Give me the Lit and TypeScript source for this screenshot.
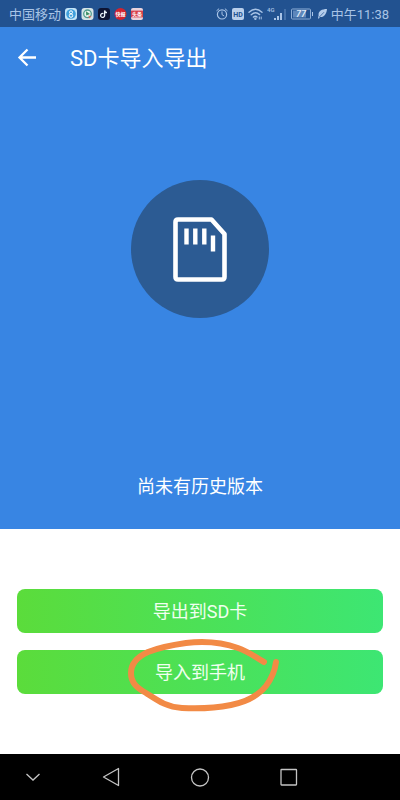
import { LitElement, html, css } from "lit";
import { customElement } from "lit/decorators.js";

@customElement("status-bar")
class StatusBar extends LitElement {
  static styles = css`
    :host {
      display: flex;
      justify-content: space-between;
      align-items: center;
      height: 27px;
      padding: 0 11px 0 9px;
      background: #225290;
      color: #a9c4e6;
      font-size: 13px;
      line-height: 20px;
      white-space: nowrap;
    }
    .side {
      display: flex;
      align-items: center;
      gap: 4px;
    }
    span {
      padding-top: 2px;
    }
    svg {
      display: block;
      flex: none;
    }
    .tiny {
      font-family: "Noto Sans CJK SC", sans-serif;
      font-weight: 700;
      font-size: 5px;
      text-anchor: middle;
      fill: #fff;
    }
    .hd {
      font-family: Roboto, sans-serif;
      font-weight: 700;
      font-size: 7px;
      text-anchor: middle;
      fill: #225290;
    }
    .net {
      font-family: Roboto, sans-serif;
      font-weight: 500;
      font-size: 6px;
      fill: #a9c4e6;
    }
    .level {
      font-family: Roboto, sans-serif;
      font-style: italic;
      font-weight: 500;
      font-size: 9px;
      text-anchor: middle;
      fill: #e4eefa;
    }
  `;

  render() {
    return html`
      <div class="side">
        <span>中国移动</span>
        <svg width="12" height="12" viewBox="0 0 12 12">
          <rect width="12" height="12" rx="3" fill="#c4e4f7" />
          <circle cx="6" cy="6" r="4.8" fill="#3f9fdc" />
          <circle cx="6" cy="4.3" r="1.5" fill="none" stroke="#fff" />
          <circle cx="6" cy="7.6" r="1.7" fill="none" stroke="#fff" />
        </svg>
        <svg width="13" height="12" viewBox="0 0 13 12">
          <rect x="0.5" width="12" height="12" rx="3" fill="#d5e3e6" />
          <circle cx="6.5" cy="5.8" r="3.8" fill="#e8f4ee" stroke="#4f9b8e" stroke-width="1.3" />
          <path d="M5 3.2L9 6L5.2 7.4Z" fill="#3d8e62" />
          <path d="M7.5 7.5L10.5 8.5L8 10.5Z" fill="#d46a5c" />
        </svg>
        <svg width="12" height="12" viewBox="0 0 12 12">
          <rect width="12" height="12" rx="3" fill="#0d1433" />
          <path d="M5.4 5.6A2 2 0 1 0 6.6 7.6V2.4C6.8 3.7 7.6 4.6 9 4.7" fill="none" stroke="#e8f2fa" stroke-width="1.3" />
        </svg>
        <svg width="13" height="12" viewBox="0 0 13 12">
          <circle cx="6.5" cy="6" r="6" fill="#d2232f" />
          <text class="tiny" x="6.5" y="8">快报</text>
        </svg>
        <svg width="12" height="12" viewBox="0 0 12 12">
          <rect width="12" height="12" rx="2" fill="#ead3dc" />
          <rect y="2.6" width="12" height="6.8" fill="#d8424c" />
          <text class="tiny" x="6" y="8">头条</text>
        </svg>
      </div>
      <div class="side">
        <svg width="12" height="12" viewBox="0 0 12 12" fill="none" stroke="#a9c4e6" stroke-linecap="round">
          <circle cx="6" cy="6.4" r="4.6" stroke-width="1.2" />
          <path d="M6 3.8V6.6L7.8 7.8M0.8 2.6L2.8 0.9M11.2 2.6L9.2 0.9" />
        </svg>
        <svg width="12" height="12" viewBox="0 0 12 12">
          <rect width="12" height="12" rx="2" fill="#b9cfeb" />
          <text class="hd" x="6" y="8.6">HD</text>
        </svg>
        <svg width="15" height="12" viewBox="0 0 15 12" fill="none" stroke="#a9c4e6" stroke-width="1.4" stroke-linecap="round">
          <path d="M1 4.2Q7.5 -1.6 14 4.2M3.2 6.8Q7.5 3 11.6 6.6M5.4 9.1Q7.4 7.5 9 9" />
          <circle cx="7.4" cy="10.7" r="0.5" />
          <path d="M11.3 9V11M13.2 9V11" stroke-width="1" />
        </svg>
        <svg width="20" height="14" viewBox="0 0 20 14">
          <text class="net" x="0" y="5">4G</text>
          <path d="M7 11H9V13H7ZM10 9H12V13H10ZM13 6H15V13H13Z" fill="#a9c4e6" />
          <path d="M17 2H19V13H17Z" fill="#4470a8" />
        </svg>
        <svg width="23" height="12" viewBox="0 0 23 12">
          <rect x="0.5" y="1" width="19" height="10" rx="1" fill="none" stroke="#8eaed6" />
          <rect x="2" y="2.5" width="13" height="7" fill="#5e87bb" />
          <path d="M21 4H22V8H21Z" fill="#a9c4e6" />
          <text class="level" x="10" y="9.3">77</text>
        </svg>
        <svg width="9" height="10" viewBox="0 0 9 10">
          <path d="M9 0C4 0 0 2 0.6 6.4L0 9.6H1L1.8 8C6 8.6 8.6 5 9 0Z" fill="#b4cdec" />
          <path d="M1.4 8L6 3.2" stroke="#225290" stroke-width="0.7" />
        </svg>
        <span>中午11:38</span>
      </div>
    `;
  }
}

@customElement("system-nav")
class SystemNav extends LitElement {
  static styles = css`
    :host {
      display: grid;
      grid-template-columns: 16fr 23fr 22fr 22fr 17fr;
      align-items: center;
      height: 46px;
      background: #000;
    }
    button {
      display: flex;
      justify-content: center;
      padding: 0;
      border: 0;
      background: none;
    }
    svg {
      display: block;
      fill: none;
      stroke: #c4c4c4;
      stroke-width: 1.3;
    }
  `;

  render() {
    return html`
      <button aria-label="收起">
        <svg width="20" height="20"><path d="M4.500 7L11 13L17.500 7" /></svg>
      </button>
      <button aria-label="返回">
        <svg width="20" height="20"><path d="M18.5 1.5V18.5L3.500 10Z" stroke-linejoin="round" /></svg>
      </button>
      <button aria-label="主页">
        <svg width="20" height="20"><circle cx="10" cy="10.5" r="8.500" /></svg>
      </button>
      <button aria-label="最近任务">
        <svg width="20" height="20"><rect x="3" y="2.5" width="15.5" height="15.5" rx="0.5" /></svg>
      </button>
    `;
  }
}

@customElement("app-root")
class AppRoot extends LitElement {
  static styles = css`
    :host {
      display: flex;
      flex-direction: column;
      min-height: 100vh;
      background: #fff;
      color: #fff;
      font-family: Roboto, "Noto Sans CJK SC", sans-serif;
    }
    .hero {
      display: flex;
      flex-direction: column;
      flex: 1 0 auto;
      background: #3885e3;
    }
    header {
      display: flex;
      align-items: center;
      gap: 33px;
      height: 62px;
      padding: 0 17px;
    }
    .back {
      padding: 0;
      border: 0;
      background: none;
    }
    svg {
      display: block;
    }
    h1 {
      margin: 0;
      padding-top: 2px;
      font-weight: 400;
      font-size: 22px;
      line-height: 32px;
    }
    .body {
      display: flex;
      flex-direction: column;
      align-items: center;
      justify-content: space-between;
      flex: 1;
      gap: 32px;
      padding: 91px 16px 28px;
    }
    .disc {
      display: grid;
      place-items: center;
      width: 138px;
      height: 138px;
      border-radius: 50%;
      background: #2c5b93;
    }
    p {
      margin: 0;
      font-size: 18px;
      line-height: 28px;
    }
    .actions {
      display: flex;
      flex-direction: column;
      gap: 17px;
      padding: 60px 17px;
    }
    .slot {
      position: relative;
      display: grid;
    }
    .action {
      height: 44px;
      padding: 2px 0 0;
      border: 0;
      border-radius: 8px;
      background: linear-gradient(90deg, #5bdc3b, #3de673);
      color: #f0fff0;
      font: inherit;
      font-size: 18px;
      line-height: 28px;
    }
    .mark {
      position: absolute;
      left: 50%;
      top: 50%;
      transform: translate(-50%, -50%);
      pointer-events: none;
    }
  `;

  render() {
    return html`
      <status-bar></status-bar>
      <section class="hero">
        <header>
          <button class="back" aria-label="返回">
            <svg width="20" height="20" fill="none" stroke="#fff" stroke-width="2.3">
              <path d="M19 9.500H2.500M10.5 1.500L2.500 9.500L10.5 17.500" />
            </svg>
          </button>
          <h1>SD卡导入导出</h1>
        </header>
        <div class="body">
          <div class="disc">
            <svg width="54" height="68" viewBox="0 0 54 68" fill="none" stroke="#fff">
              <path
                d="M5 4.500H38.5L51.5 19V62Q51.5 64.500 49 64.500H5Q2.500 64.500 2.500 62V7Q2.500 4.500 5 4.500Z"
                stroke-width="4.6"
                stroke-linejoin="round"
              />
              <path d="M13.5 13.500V29.500M22.3 13.500V29.500M31.3 13.500V29.500M40 20.500V36.500" stroke-width="4.4" />
            </svg>
          </div>
          <p>尚未有历史版本</p>
        </div>
      </section>
      <section class="actions">
        <button class="action">导出到SD卡</button>
        <div class="slot">
          <button class="action">导入到手机</button>
          <svg class="mark" width="160" height="80" viewBox="0 0 160 80" fill="none" stroke="#f28a45" stroke-width="6" stroke-linecap="round" stroke-linejoin="round">
            <path
              d="M144 30C136 26 130 20 118 16C104 11 84 9 66 11C52 13 38 16 28 20C17 25 11 32 11 41C11 51 17 56 26 61C37 68 46 75 62 76C80 77 96 76 111 73C126 70 138 64 146 54C152 46 155 38 156 30"
            />
          </svg>
        </div>
      </section>
      <system-nav></system-nav>
    `;
  }
}
